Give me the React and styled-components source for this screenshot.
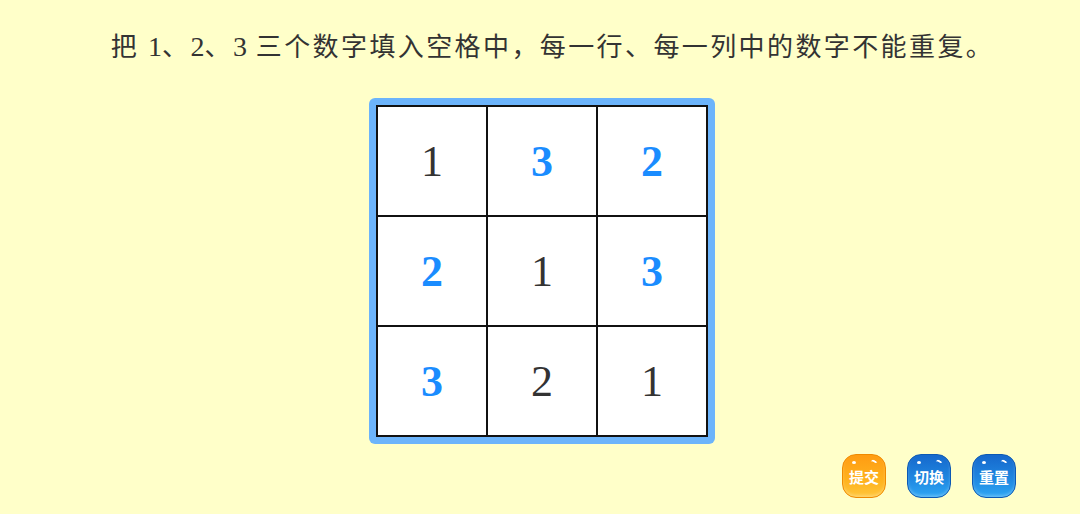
import React from 'react'
import styled, { createGlobalStyle } from 'styled-components'

const GlobalStyle = createGlobalStyle`
  html, body {
    margin: 0;
    padding: 0;
    background: #ffffc9;
  }
`;

const Page = styled.div`
  width: 1080px;
  height: 514px;
  display: flex;
  flex-direction: column;
  align-items: center;
  background: #ffffc9;
  overflow: hidden;
`;

const Title = styled.h1`
  margin: 29px 0 0 25px;
  font-family: "Liberation Serif", "Noto Sans CJK SC", serif;
  font-weight: 400;
  font-size: 26px;
  line-height: 36px;
  letter-spacing: 2.4px;
  color: #333;
  white-space: nowrap;
`;

const Num = styled.span`
  font-size: 28px;
  letter-spacing: 0;
`;

const Frame = styled.div`
  margin: 32px 0 0 4px;
  padding: 7px;
  background: #6cb4fb;
  border-radius: 6px;
`;

const Board = styled.div`
  display: grid;
  grid-template-columns: repeat(3, 108px);
  grid-template-rows: repeat(3, 108px);
  gap: 2px;
  padding: 2px;
  background: #111;
`;

const Cell = styled.div`
  display: flex;
  align-items: center;
  justify-content: center;
  background: #fff;
  font-family: "Liberation Serif", "DejaVu Serif", serif;
  font-size: 44px;
  font-weight: ${p => (p.$filled ? 700 : 400)};
  color: ${p => (p.$filled ? '#1a8cff' : '#333')};
`;

const Footer = styled.div`
  align-self: stretch;
  display: flex;
  justify-content: flex-end;
  gap: 21px;
  padding: 10px 64px 0 0;
`;

const Button = styled.button`
  position: relative;
  width: 44px;
  height: 44px;
  padding: 0;
  border-radius: 14px;
  border: 1px solid ${p => (p.$orange ? '#f08a00' : '#0c59b4')};
  background: ${p =>
    p.$orange
      ? 'linear-gradient(180deg, #ff9c12 0%, #ffb21e 60%, #ffc63a 100%)'
      : 'linear-gradient(180deg, #1668cc 0%, #1f86e0 55%, #2da6f4 100%)'};
  color: #fff;
  font-family: "Noto Sans CJK SC", sans-serif;
  font-size: 15px;
  font-weight: 700;
  line-height: 44px;
  cursor: pointer;
  box-shadow: inset 0 -2px 3px rgba(255, 255, 255, 0.25);

  &::before {
    content: '';
    position: absolute;
    top: 6px;
    left: 9px;
    width: 4px;
    height: 3px;
    border-radius: 50%;
    background: #fff;
  }

  &::after {
    content: '';
    position: absolute;
    top: 5px;
    right: 8px;
    width: 5px;
    height: 5px;
    border-top: 2px solid #fff;
    border-right: 2px solid transparent;
    border-radius: 50%;
    transform: rotate(30deg);
  }
`;

const board = [
  [1, 3, 2],
  [2, 1, 3],
  [3, 2, 1],
];

// cells the player filled in, shown in blue
const filled = [
  [false, true, true],
  [true, false, true],
  [true, false, false],
];

export default function App() {
  return (
    <Page>
      <GlobalStyle />
      <Title>
        把 <Num>1</Num>、<Num>2</Num>、<Num>3</Num> 三个数字填入空格中，每一行、每一列中的数字不能重复。
      </Title>
      <Frame>
        <Board>
          {board.map((row, r) =>
            row.map((n, c) => (
              <Cell key={`${r}-${c}`} $filled={filled[r][c]}>
                {n}
              </Cell>
            ))
          )}
        </Board>
      </Frame>
      <Footer>
        <Button $orange>提交</Button>
        <Button>切换</Button>
        <Button>重置</Button>
      </Footer>
    </Page>
  );
}
